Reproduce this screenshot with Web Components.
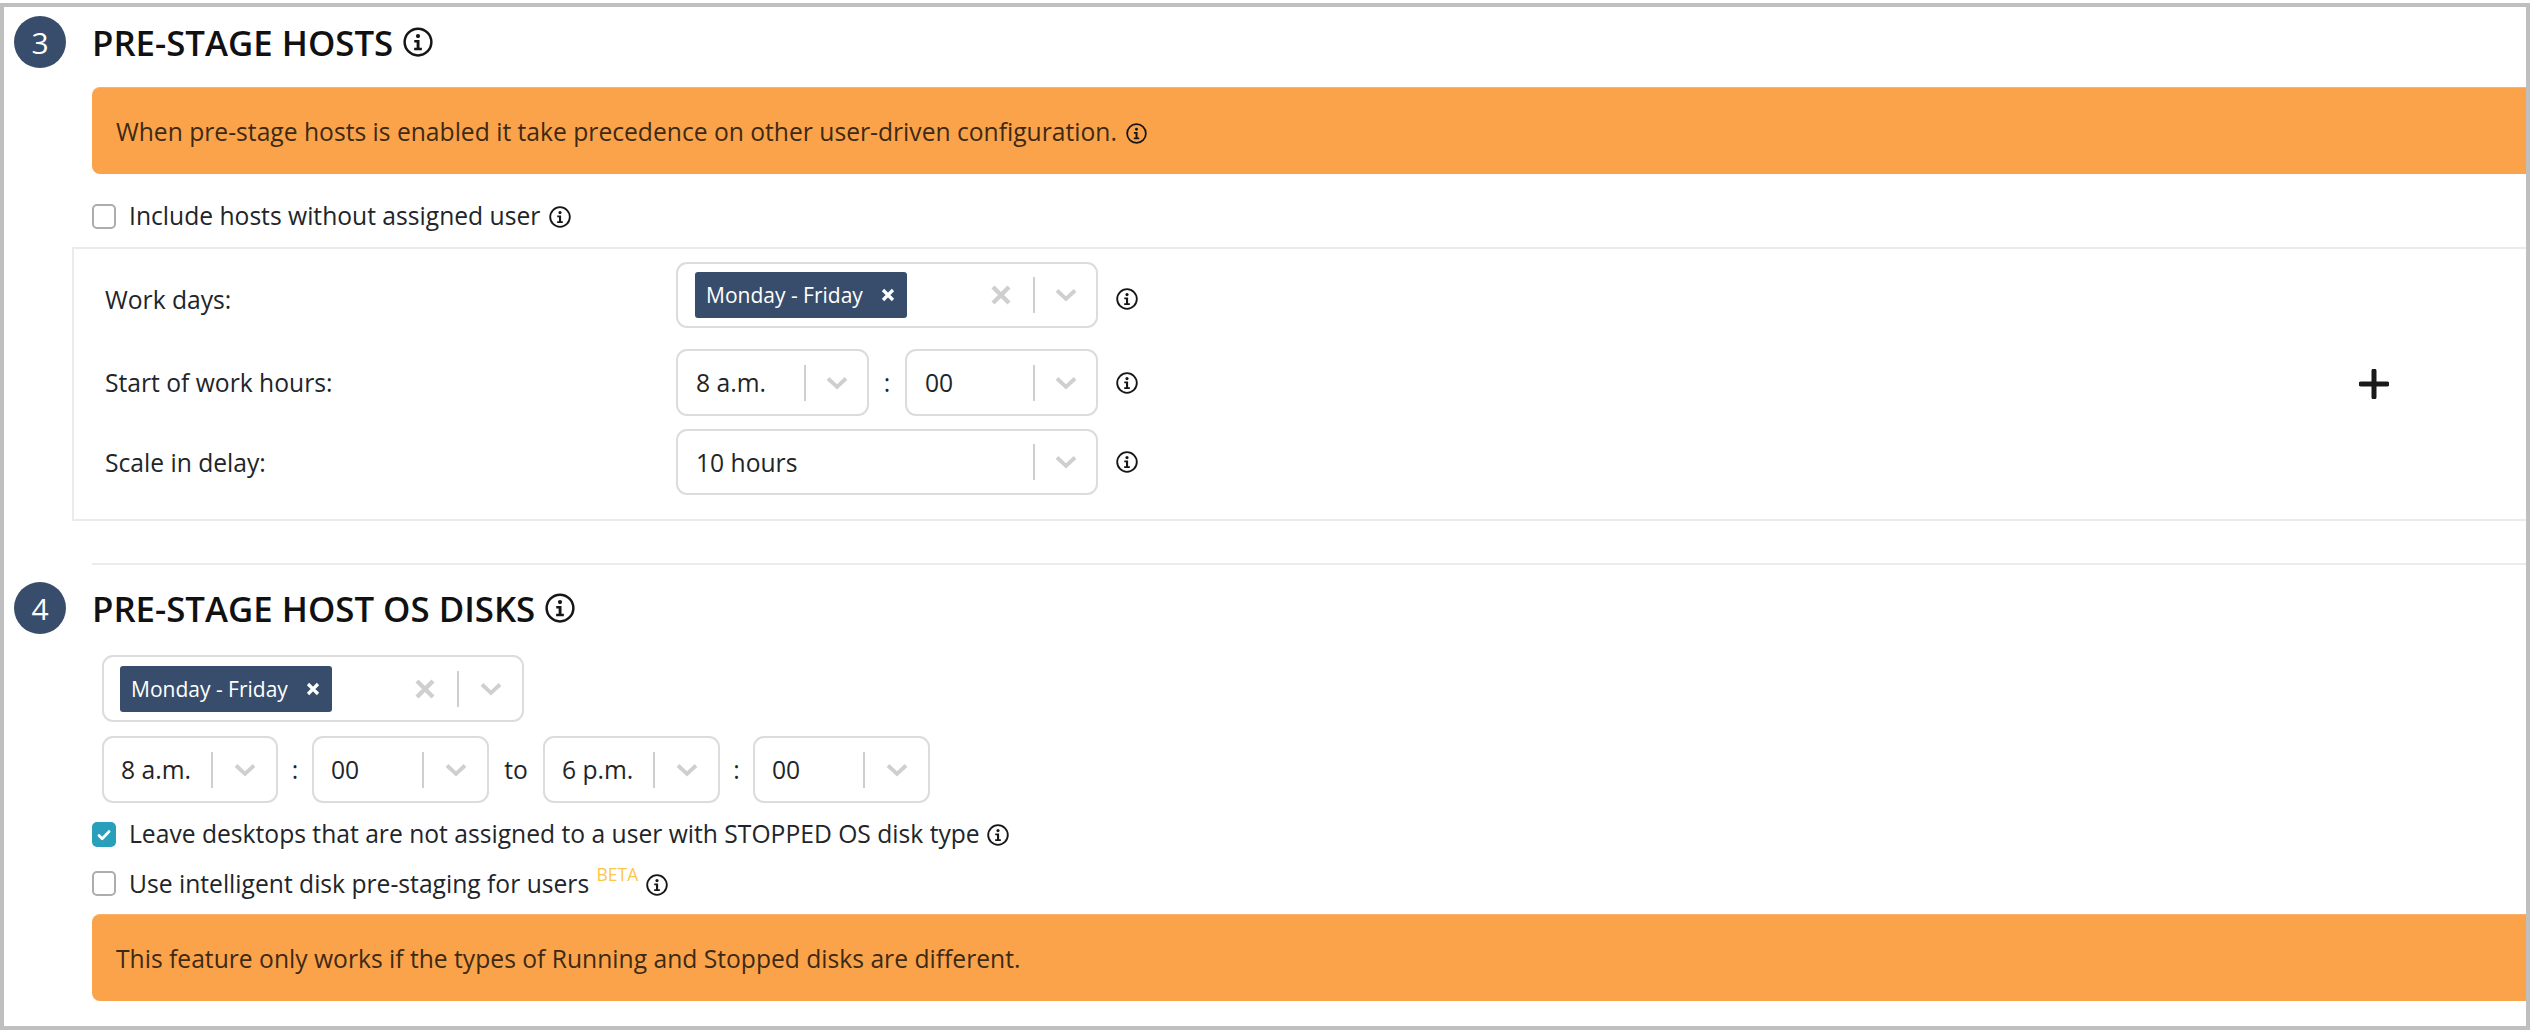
<!DOCTYPE html>
<html>
<head>
<meta charset="utf-8">
<title>Pre-stage hosts</title>
<style>
  html, body { margin: 0; background: #fff; }
  body { font-family: "Open Sans", "Noto Sans", sans-serif; font-size: 24.65px; color: #212529; }
</style>
</head>
<body>
<settings-frame>
  <step-header num="3" style="margin-top:9px">PRE-STAGE HOSTS</step-header>
  <warn-banner style="margin-top:19px">When pre-stage hosts is enabled it take precedence on other user-driven configuration. <info-icon size="21" style="margin-left:3px"></info-icon></warn-banner>
  <check-row style="margin-top:30px">Include hosts without assigned user <info-icon size="22" style="margin-left:2px"></info-icon></check-row>

  <config-box style="margin-top:18px">
    <form-row label="Work days:" style="height:66px;--nudge:8px">
      <pick-list tag="Monday - Friday" clear style="width:422px;--pad:17px"></pick-list>
    </form-row>
    <form-row label="Start of work hours:" style="height:67px;margin-top:21px">
      <pick-list value="8 a.m." style="width:193px;--pad:18px"></pick-list>
      <time-sep style="width:36px">:</time-sep>
      <pick-list value="00" style="width:193px;--pad:18px"></pick-list>
    </form-row>
    <form-row label="Scale in delay:" style="height:66px;margin-top:13px">
      <pick-list value="10 hours" style="width:422px;--pad:18px"></pick-list>
    </form-row>
  </config-box>

  <section-rule></section-rule>

  <step-header num="4" style="margin-top:17px">PRE-STAGE HOST OS DISKS</step-header>
  <schedule-row style="margin-top:21px">
    <pick-list tag="Monday - Friday" clear style="width:422px;height:67px"></pick-list>
  </schedule-row>
  <schedule-row style="margin-top:14px">
    <pick-list value="8 a.m." style="width:176px"></pick-list>
    <time-sep style="width:34px">:</time-sep>
    <pick-list value="00" style="width:177px"></pick-list>
    <time-sep style="width:54px">to</time-sep>
    <pick-list value="6 p.m." style="width:177px"></pick-list>
    <time-sep style="width:33px">:</time-sep>
    <pick-list value="00" style="width:177px"></pick-list>
  </schedule-row>
  <check-row checked style="margin-top:19px">Leave desktops that are not assigned to a user with STOPPED OS disk type <info-icon size="22" style="margin-left:1px"></info-icon></check-row>
  <check-row style="margin-top:24px">Use intelligent disk pre-staging for users <beta-mark>BETA</beta-mark> <info-icon size="22" style="margin-left:1px"></info-icon></check-row>
  <warn-banner style="margin-top:18px">This feature only works if the types of Running and Stopped disks are different.</warn-banner>
</settings-frame>

<script>
const INFO_SVG = size => `<svg width="${size}" height="${size}" viewBox="0 0 24 24" fill="none" style="display:block">
  <circle cx="12" cy="12" r="10.7" stroke="#161616" stroke-width="2"/>
  <circle cx="12" cy="7.2" r="1.7" fill="#161616"/>
  <path d="M9 10.4h4.2v6.2h1.9v1.9H8.9v-1.9h2v-4.3H9z" fill="#161616"/>
</svg>`;

class SettingsFrame extends HTMLElement {
    constructor() {
        super();
        this.attachShadow({ mode: 'open' });
        this.shadowRoot.innerHTML = `
            <style>
                :host {
                    display: block;
                    box-sizing: border-box;
                    margin-top: 3px;
                    height: 1027px;
                    border: 4px solid #bfbfbf;
                    background: #fff;
                    overflow: hidden;
                }
            </style>
            <slot></slot>
        `;
    }
}

class InfoIcon extends HTMLElement {
    constructor() {
        super();
        this.attachShadow({ mode: 'open' });
    }

    connectedCallback() {
        const size = this.getAttribute('size') || 21;
        this.shadowRoot.innerHTML = `
            <style>
                :host { display: inline-block; vertical-align: -3px; }
            </style>
            ${INFO_SVG(size)}
        `;
    }
}

class StepHeader extends HTMLElement {
    constructor() {
        super();
        this.attachShadow({ mode: 'open' });
    }

    connectedCallback() {
        this.shadowRoot.innerHTML = `
            <style>
                :host {
                    display: flex;
                    align-items: center;
                    height: 52px;
                    padding-left: 10px;
                }
                .num {
                    width: 52px;
                    height: 52px;
                    border-radius: 50%;
                    background: #384d6b;
                    color: #fff;
                    font-size: 30px;
                    display: flex;
                    align-items: center;
                    justify-content: center;
                    margin-right: 26px;
                }
                .title {
                    font-size: 34.8px;
                    font-weight: 600;
                    color: #111;
                    white-space: nowrap;
                }
                info-icon { margin-left: 10px; }
            </style>
            <div class="num">${this.getAttribute('num')}</div>
            <div class="title"><slot></slot></div>
            <info-icon size="30"></info-icon>
        `;
    }
}

class WarnBanner extends HTMLElement {
    constructor() {
        super();
        this.attachShadow({ mode: 'open' });
        this.shadowRoot.innerHTML = `
            <style>
                :host {
                    display: flex;
                    align-items: center;
                    box-sizing: border-box;
                    height: 87px;
                    margin-left: 88px;
                    padding-left: 24px;
                    background: #fba34b;
                    border-top: 1px solid #fcb26b;
                    border-radius: 8px 0 0 8px;
                    color: #3d2a14;
                    white-space: nowrap;
                }
            </style>
            <div><slot></slot></div>
        `;
    }
}

class CheckRow extends HTMLElement {
    constructor() {
        super();
        this.attachShadow({ mode: 'open' });
    }

    connectedCallback() {
        const checked = this.hasAttribute('checked');
        this.shadowRoot.innerHTML = `
            <style>
                :host {
                    display: flex;
                    align-items: center;
                    height: 25px;
                    margin-left: 88px;
                    white-space: nowrap;
                }
                .box {
                    box-sizing: border-box;
                    width: 24px;
                    height: 25px;
                    flex: none;
                    border-radius: 5px;
                    margin-right: 13px;
                    border: 2px solid ${checked ? '#2a9fbc' : '#adadad'};
                    background: ${checked ? '#2a9fbc' : '#fff'};
                    display: flex;
                    align-items: center;
                    justify-content: center;
                }
                .txt { margin-top: -2px; }
                svg { display: block; }
            </style>
            <div class="box">${checked ? '<svg width="14" height="14" viewBox="0 0 14 14"><path d="M2 7.5l3.2 3.2L12 3.6" fill="none" stroke="#fff" stroke-width="2.8" stroke-linecap="round" stroke-linejoin="round"/></svg>' : ''}</div>
            <div class="txt"><slot></slot></div>
        `;
    }
}

class BetaMark extends HTMLElement {
    constructor() {
        super();
        this.attachShadow({ mode: 'open' });
        this.shadowRoot.innerHTML = `
            <style>
                :host {
                    display: inline-block;
                    font-size: 17.5px;
                    color: #fcc64b;
                    vertical-align: 12px;
                    line-height: 1;
                    margin-left: 1px;
                }
            </style>
            <slot></slot>
        `;
    }
}

class ConfigBox extends HTMLElement {
    constructor() {
        super();
        this.attachShadow({ mode: 'open' });
        this.shadowRoot.innerHTML = `
            <style>
                :host {
                    display: flex;
                    box-sizing: border-box;
                    height: 274px;
                    margin-left: 68px;
                    border: 2px solid #ebebeb;
                    border-right: 0;
                }
                .rows { flex: 1; padding: 13px 0 0 31px; }
                svg { display: block; align-self: center; margin-right: 137px; }
            </style>
            <div class="rows"><slot></slot></div>
            <svg width="30" height="30" viewBox="0 0 30 30">
                <path d="M15 2v26M2 15h26" stroke="#1a1a1a" stroke-width="5" stroke-linecap="round" fill="none"/>
            </svg>
        `;
    }
}

class FormRow extends HTMLElement {
    constructor() {
        super();
        this.attachShadow({ mode: 'open' });
    }

    connectedCallback() {
        this.shadowRoot.innerHTML = `
            <style>
                :host { display: flex; align-items: center; }
                .label { width: 571px; flex: none; margin-top: var(--nudge, 0); }
                .ctl { display: flex; align-items: center; height: 100%; }
                info-icon { margin-left: 18px; margin-top: var(--nudge, 0); }
            </style>
            <div class="label">${this.getAttribute('label')}</div>
            <div class="ctl"><slot></slot></div>
            <info-icon size="22"></info-icon>
        `;
    }
}

class ScheduleRow extends HTMLElement {
    constructor() {
        super();
        this.attachShadow({ mode: 'open' });
        this.shadowRoot.innerHTML = `
            <style>
                :host {
                    display: flex;
                    align-items: center;
                    height: 67px;
                    margin-left: 98px;
                    --chev: 63px;
                }
            </style>
            <slot></slot>
        `;
    }
}

class TimeSep extends HTMLElement {
    constructor() {
        super();
        this.attachShadow({ mode: 'open' });
        this.shadowRoot.innerHTML = `
            <style>
                :host { display: block; flex: none; text-align: center; }
            </style>
            <slot></slot>
        `;
    }
}

class PickList extends HTMLElement {
    constructor() {
        super();
        this.attachShadow({ mode: 'open' });
    }

    connectedCallback() {
        const tag = this.getAttribute('tag');
        const value = this.getAttribute('value');
        const clear = this.hasAttribute('clear');
        this.shadowRoot.innerHTML = `
            <style>
                :host {
                    display: flex;
                    align-items: center;
                    box-sizing: border-box;
                    height: 100%;
                    flex: none;
                    border: 2px solid #dcdcdc;
                    border-radius: 11px;
                    background: #fff;
                }
                .val { flex: 1; min-width: 0; padding-left: var(--pad, 17px); white-space: nowrap; }
                .tag {
                    display: inline-flex;
                    align-items: center;
                    height: 46px;
                    margin-left: var(--pad, 16px);
                    padding: 0 11px 0 11px;
                    background: #384d6b;
                    color: #fff;
                    font-size: 21px;
                    border-radius: 3px;
                    white-space: nowrap;
                }
                .tag svg { margin-left: 17px; }
                .tags { flex: 1; }
                .x { margin-right: 22px; display: block; }
                .sep { width: 2px; height: 36px; background: #cfcfcf; flex: none; }
                .chev { width: var(--chev, 61px); display: flex; justify-content: center; flex: none; }
            </style>
            ${tag
                ? `<div class="tags"><span class="tag">${tag}<svg width="16" height="16" viewBox="0 0 16 16"><path d="M3 3l10 10M13 3L3 13" stroke="#fff" stroke-width="3.2" fill="none"/></svg></span></div>`
                : `<div class="val">${value}</div>`}
            ${clear ? `<svg class="x" width="20" height="20" viewBox="0 0 20 20"><path d="M2 2l16 16M18 2L2 18" stroke="#cfcfcf" stroke-width="4.4" fill="none"/></svg>` : ''}
            <div class="sep"></div>
            <div class="chev"><svg width="22" height="14" viewBox="0 0 22 14"><path d="M2 2.5l9 8.5 9-8.5" stroke="#cfcfcf" stroke-width="3.8" fill="none"/></svg></div>
        `;
    }
}

class SectionRule extends HTMLElement {
    constructor() {
        super();
        this.attachShadow({ mode: 'open' });
        this.shadowRoot.innerHTML = `
            <style>
                :host {
                    display: block;
                    height: 2px;
                    margin: 42px 0 0 88px;
                    background: #ebebeb;
                }
            </style>
        `;
    }
}

customElements.define('settings-frame', SettingsFrame);
customElements.define('info-icon', InfoIcon);
customElements.define('step-header', StepHeader);
customElements.define('warn-banner', WarnBanner);
customElements.define('check-row', CheckRow);
customElements.define('beta-mark', BetaMark);
customElements.define('config-box', ConfigBox);
customElements.define('form-row', FormRow);
customElements.define('schedule-row', ScheduleRow);
customElements.define('time-sep', TimeSep);
customElements.define('pick-list', PickList);
customElements.define('section-rule', SectionRule);
</script>
</body>
</html>
